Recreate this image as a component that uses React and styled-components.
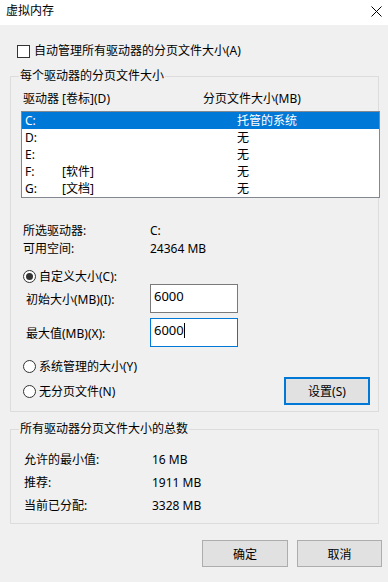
import React from 'react';
import styled, { createGlobalStyle } from 'styled-components';

const GlobalStyle = createGlobalStyle`
  html, body {
    margin: 0;
    padding: 0;
    background: #f0f0f0;
  }
  body {
    font-family: "Noto Sans", "Noto Sans CJK SC", sans-serif;
    font-size: 12px;
    color: #000;
  }
`;

const Window = styled.div`
  width: 388px;
  height: 582px;
  background: #f0f0f0;
  overflow: hidden;
`;

const TitleBar = styled.div`
  height: 25px;
  background: #fff;
  display: flex;
  align-items: center;
  justify-content: space-between;
  padding: 0 6px;
  box-sizing: border-box;
  font-size: 12px;
  line-height: 16px;
  padding-bottom: 3px;
`;

const CloseIcon = styled.svg`
  width: 11px;
  height: 11px;
  margin-right: 0px;
`;

const CheckRow = styled.label`
  display: flex;
  align-items: center;
  height: 14px;
  line-height: 14px;
  margin: 19px 0 0 17px;
  gap: 4px;
`;

const CheckBox = styled.span`
  width: 11px;
  height: 11px;
  border: 1px solid #333;
  background: #fff;
`;

const Group = styled.fieldset`
  margin: ${p => p.$top}px 9px 0 10px;
  padding: 0 0 6px 0;
  border: 1px solid #dcdcdc;
  min-width: 0;
`;

const Legend = styled.legend`
  margin-left: 8px;
  padding: 0 1px;
  line-height: 16px;
  height: 16px;
`;

const HeaderRow = styled.div`
  display: flex;
  margin: 7px 0 0 12px;
  line-height: 16px;
`;

const HeadCell = styled.span`
  width: ${p => p.$w}px;
`;

const ListBox = styled.div`
  margin: 4px 0 0 10px;
  width: 357px;
  border: 1px solid #828790;
  background: #fff;
`;

const ListRow = styled.div`
  display: flex;
  height: 17px;
  line-height: 17px;
  padding-left: 3px;
  background: ${p => (p.$selected ? '#0078d7' : 'transparent')};
  color: ${p => (p.$selected ? '#fff' : '#000')};
`;

const Cell = styled.span`
  width: ${p => p.$w}px;
  flex: none;
`;

const InfoRow = styled.div`
  display: flex;
  height: ${p => p.$h || 18}px;
  line-height: ${p => p.$h || 18}px;
  margin: ${p => p.$top || 0}px 0 0 ${p => p.$left || 12}px;
`;

const InfoLabel = styled.span`
  width: ${p => p.$w}px;
  flex: none;
`;

const RadioRow = styled.label`
  display: flex;
  align-items: center;
  height: ${p => p.$h || 16}px;
  margin: ${p => p.$top}px 0 0 12px;
  gap: 3px;
`;

const Radio = styled.span`
  width: 11px;
  height: 11px;
  border: 1px solid #333;
  border-radius: 50%;
  background: #fff;
  display: flex;
  align-items: center;
  justify-content: center;
  flex: none;
  &::after {
    content: '';
    display: ${p => (p.$checked ? 'block' : 'none')};
    width: 7px;
    height: 7px;
    border-radius: 50%;
    background: #333;
  }
`;

const FieldRow = styled.div`
  display: flex;
  align-items: center;
  margin: ${p => p.$top}px 0 0 15px;
`;

const FieldLabel = styled.span`
  width: 124px;
  flex: none;
`;

const TextInput = styled.div`
  width: 88px;
  height: 29px;
  box-sizing: border-box;
  border: 1px solid ${p => (p.$focused ? '#0078d7' : '#7a7a7a')};
  background: #fff;
  padding: 3px 0 0 3px;
  font-size: 13px;
  line-height: 16px;
`;

const Caret = styled.span`
  display: inline-block;
  width: 1px;
  height: 15px;
  background: #000;
  vertical-align: -3px;
`;

const Spacer = styled.div`
  flex: 1;
`;

const Button = styled.button`
  width: ${p => p.$w}px;
  height: ${p => p.$h}px;
  box-sizing: border-box;
  background: #e1e1e1;
  border: ${p => (p.$default ? '2px solid #0078d7' : '1px solid #adadad')};
  font-family: inherit;
  font-size: 12px;
  color: #000;
  padding: 0;
`;

const ButtonBar = styled.div`
  display: flex;
  justify-content: flex-end;
  gap: 9px;
  margin: 16px 6px 0 0;
`;

const drives = [
  { d: 'C:', label: '', size: '托管的系统', selected: true },
  { d: 'D:', label: '', size: '无' },
  { d: 'E:', label: '', size: '无' },
  { d: 'F:', label: '[软件]', size: '无' },
  { d: 'G:', label: '[文档]', size: '无' },
];

export default function App() {
  return (
    <Window>
      <GlobalStyle />
      <TitleBar>
        <span>虚拟内存</span>
        <CloseIcon viewBox="0 0 11 11">
          <path d="M0.5 0.5 L10.5 10.5 M10.5 0.5 L0.5 10.5" stroke="#000" strokeWidth="1" fill="none" />
        </CloseIcon>
      </TitleBar>

      <CheckRow>
        <CheckBox />
        <span>自动管理所有驱动器的分页文件大小(A)</span>
      </CheckRow>

      <Group $top={10}>
        <Legend>每个驱动器的分页文件大小</Legend>
        <HeaderRow>
          <HeadCell $w={180}>驱动器 [卷标](D)</HeadCell>
          <HeadCell $w={120}>分页文件大小(MB)</HeadCell>
        </HeaderRow>
        <ListBox>
          {drives.map(r => (
            <ListRow key={r.d} $selected={r.selected}>
              <Cell $w={37}>{r.d}</Cell>
              <Cell $w={175}>{r.label}</Cell>
              <Cell $w={120}>{r.size}</Cell>
            </ListRow>
          ))}
        </ListBox>

        <InfoRow $top={24}>
          <InfoLabel $w={127}>所选驱动器:</InfoLabel>
          <span>C:</span>
        </InfoRow>
        <InfoRow>
          <InfoLabel $w={127}>可用空间:</InfoLabel>
          <span>24364 MB</span>
        </InfoRow>

        <RadioRow $top={10}>
          <Radio $checked />
          <span>自定义大小(C):</span>
        </RadioRow>
        <FieldRow $top={0}>
          <FieldLabel>初始大小(MB)(I):</FieldLabel>
          <TextInput>6000</TextInput>
        </FieldRow>
        <FieldRow $top={5}>
          <FieldLabel>最大值(MB)(X):</FieldLabel>
          <TextInput $focused>
            6000<Caret />
          </TextInput>
        </FieldRow>

        <RadioRow $top={11}>
          <Radio />
          <span>系统管理的大小(Y)</span>
        </RadioRow>
        <RadioRow $top={3} $h={28}>
          <Radio />
          <span>无分页文件(N)</span>
          <Spacer />
          <Button $w={86} $h={28} $default style={{ marginRight: 8 }}>设置(S)</Button>
        </RadioRow>
      </Group>

      <Group $top={9}>
        <Legend>所有驱动器分页文件大小的总数</Legend>
        <InfoRow $top={11} $h={23} $left={13}>
          <InfoLabel $w={128}>允许的最小值:</InfoLabel>
          <span>16 MB</span>
        </InfoRow>
        <InfoRow $h={23} $left={13}>
          <InfoLabel $w={128}>推荐:</InfoLabel>
          <span>1911 MB</span>
        </InfoRow>
        <InfoRow $h={23} $left={13}>
          <InfoLabel $w={128}>当前已分配:</InfoLabel>
          <span>3328 MB</span>
        </InfoRow>
      </Group>

      <ButtonBar>
        <Button $w={86} $h={27}>确定</Button>
        <Button $w={85} $h={27}>取消</Button>
      </ButtonBar>
    </Window>
  );
}
